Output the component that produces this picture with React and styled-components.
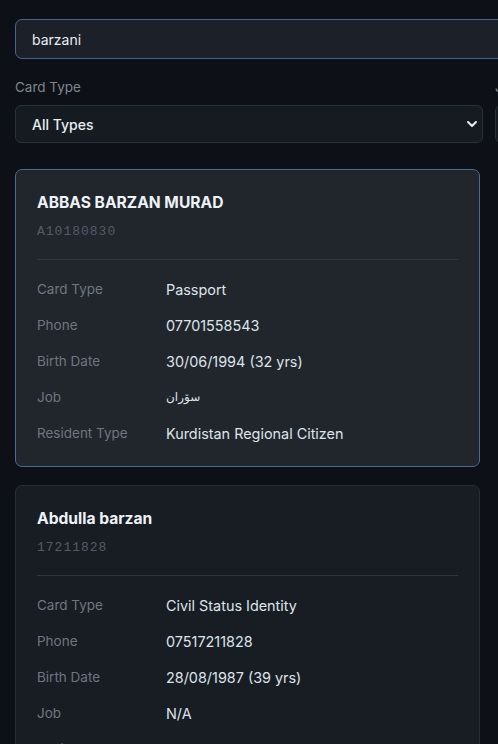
import styled, { createGlobalStyle } from "styled-components";

const GlobalStyle = createGlobalStyle`
  html, body {
    margin: 0;
    padding: 0;
    background: #0d1117;
    overflow: hidden;
  }
  * {
    box-sizing: border-box;
  }
`;

const people = [
  {
    name: "ABBAS BARZAN MURAD",
    id: "A10180830",
    active: true,
    rows: [
      ["Card Type", "Passport"],
      ["Phone", "07701558543"],
      ["Birth Date", "30/06/1994 (32 yrs)"],
      ["Job", "سۆران", true],
      ["Resident Type", "Kurdistan Regional Citizen"],
    ],
  },
  {
    name: "Abdulla barzan",
    id: "17211828",
    active: false,
    rows: [
      ["Card Type", "Civil Status Identity"],
      ["Phone", "07517211828"],
      ["Birth Date", "28/08/1987 (39 yrs)"],
      ["Job", "N/A"],
      ["Resident Type", "Kurdistan Regional Citizen"],
    ],
  },
];

const Page = styled.div`
  width: 978px;
  height: 744px;
  padding: 19px 15px 0 15px;
  font-family: Inter, "Noto Sans", "DejaVu Sans", sans-serif;
  color: #e6edf3;
`;

const SearchInput = styled.input`
  display: block;
  width: 100%;
  height: 40px;
  padding: 0 16px;
  background: #1c2129;
  border: 1px solid #46658c;
  border-radius: 7px;
  color: #e6edf3;
  font-family: inherit;
  font-size: 14px;
  outline: none;
  caret-color: #e6edf3;
`;

const Filters = styled.div`
  display: grid;
  grid-template-columns: 468px 1fr;
  column-gap: 12px;
  margin-top: 19px;
`;

const Field = styled.div`
  display: flex;
  flex-direction: column;
`;

const FieldLabel = styled.label`
  font-size: 13.5px;
  line-height: 18px;
  color: #7d8590;
  margin-bottom: 9px;
`;

const SelectWrap = styled.div`
  position: relative;
`;

const Select = styled.select`
  appearance: none;
  width: 100%;
  height: 38px;
  padding: 0 16px;
  background: #161b22;
  border: 1px solid #2b3139;
  border-radius: 6px;
  color: #e6edf3;
  font-family: inherit;
  font-size: 14px;
  font-weight: 500;
  outline: none;
`;

const Chevron = styled.svg`
  position: absolute;
  right: 5px;
  top: 14px;
  pointer-events: none;
`;

const List = styled.div`
  display: flex;
  flex-direction: column;
  gap: 18px;
  width: 465px;
  margin-top: 26px;
`;

const Card = styled.div`
  padding: 23px 21px 15px 21px;
  border-radius: 7px;
  border: 1px solid ${(p) => (p.$active ? "#4a6a90" : "#272d35")};
  background: ${(p) => (p.$active ? "#21262d" : "#181d24")};
`;

const Name = styled.div`
  font-size: 15.6px;
  line-height: 20px;
  font-weight: 700;
  color: #eef2f6;
`;

const CardId = styled.div`
  margin-top: 10px;
  font-family: "Liberation Mono", "DejaVu Sans Mono", monospace;
  font-size: 13px;
  line-height: 18px;
  letter-spacing: 1px;
  color: #535b66;
`;

const Divider = styled.div`
  height: 1px;
  background: #30363e;
  margin: 18px 0 11px 0;
`;

const Row = styled.div`
  display: grid;
  grid-template-columns: 129px 1fr;
  align-items: center;
  height: 36px;
`;

const RowLabel = styled.span`
  font-size: 13.5px;
  color: #6e7681;
`;

const RowValue = styled.span`
  justify-self: start;
  font-size: ${(p) => (p.$rtl ? "12px" : "14.4px")};
  color: #dde3ea;
  font-family: ${(p) =>
    p.$rtl ? '"DejaVu Sans", "Noto Sans", sans-serif' : "inherit"};
`;

export default function App() {
  return (
    <>
      <GlobalStyle />
      <Page>
        <SearchInput defaultValue="barzani" spellCheck={false} />
        <Filters>
          <Field>
            <FieldLabel>Card Type</FieldLabel>
            <SelectWrap>
              <Select defaultValue="all">
                <option value="all">All Types</option>
              </Select>
              <Chevron width="12" height="10" viewBox="0 0 12 10">
                <path
                  d="M2 3 L6 7 L10 3"
                  fill="none"
                  stroke="#e6edf3"
                  strokeWidth="2"
                  strokeLinecap="round"
                  strokeLinejoin="round"
                />
              </Chevron>
            </SelectWrap>
          </Field>
          <Field>
            <FieldLabel>Job</FieldLabel>
            <SelectWrap>
              <Select defaultValue="all">
                <option value="all">All Jobs</option>
              </Select>
            </SelectWrap>
          </Field>
        </Filters>
        <List>
          {people.map((p) => (
            <Card key={p.id} $active={p.active}>
              <Name>{p.name}</Name>
              <CardId>{p.id}</CardId>
              <Divider />
              {p.rows.map(([label, value, rtl]) => (
                <Row key={label}>
                  <RowLabel>{label}</RowLabel>
                  <RowValue $rtl={rtl} dir={rtl ? "rtl" : undefined}>
                    {value}
                  </RowValue>
                </Row>
              ))}
            </Card>
          ))}
        </List>
      </Page>
    </>
  );
}
